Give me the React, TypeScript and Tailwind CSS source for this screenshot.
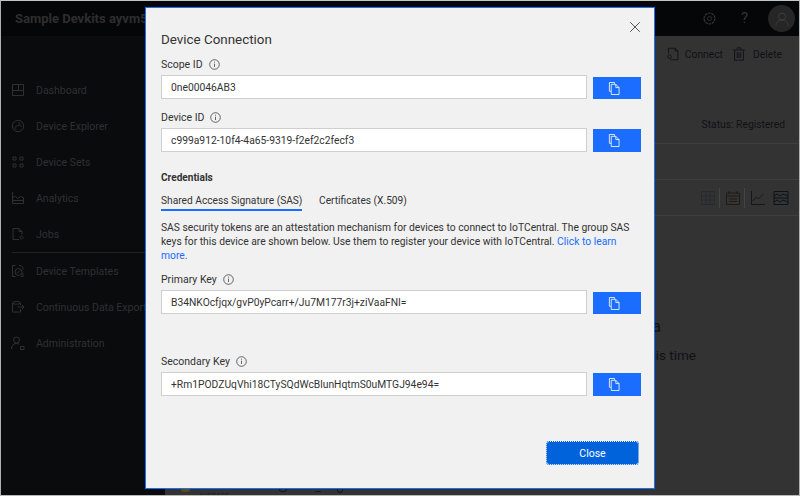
import { X } from "lucide-react";
import type { ReactNode } from "react";

function Glyph({ children, size = 18 }: { children: ReactNode; size?: number }) {
  return (
    <svg width={size} height={size} viewBox="0 0 18 18" fill="none" stroke="currentColor" strokeWidth="1" className="shrink-0">
      {children}
    </svg>
  );
}

const navTop = [
  {
    label: "Dashboard",
    icon: <path d="M3.5 3.5h11v11h-11zM3.5 9.5h11M9.5 3.5v6" />,
  },
  {
    label: "Device Explorer",
    icon: (
      <>
        <circle cx="9" cy="9" r="5.7" />
        <path d="M7 12.5c-2-2-.5-3.5 1-3.5s3-1.5 2-4M10.5 8.5a1 1 0 1 1 1.5 1.5" />
      </>
    ),
  },
  {
    label: "Device Sets",
    icon: <path d="M4 4h3v3H4zM11 4h3v3h-3zM4 11h3v3H4zM11 11h3v3h-3z" />,
  },
  {
    label: "Analytics",
    icon: <path d="M3.5 3v11.5h11v-6l-3-1-3 2-2-2-3 1M3.5 11.5h11" />,
  },
  {
    label: "Jobs",
    icon: <path d="M10 14.5H4V3.5h6l3 3v3M10 3.5v3h3M12.5 11a1.5 1.5 0 1 0 .01 0" />,
  },
];

const navBottom = [
  {
    label: "Device Templates",
    icon: (
      <>
        <path d="M3.5 3.5h3M3.5 14.5V3.5M3.5 14.5h3M10 3.5h2l2 2v2M14 11v3.5h-2" />
        <circle cx="9.5" cy="10" r="3.5" />
        <path d="M8 11.5l3-3" />
      </>
    ),
  },
  {
    label: "Continuous Data Export",
    icon: <path d="M3.5 5v9h8v-3M3.5 5c0-2 8-2 8 0v2M3.5 5c0 1.5 8 1.5 8 0M9 9h6M13 7l2 2-2 2" />,
  },
  {
    label: "Administration",
    icon: (
      <>
        <circle cx="7.5" cy="6" r="3" />
        <path d="M2.5 15c0-3.5 2-5.5 5-5.5 1 0 1.8.2 2.5.6M11.5 12.5H15v3h-3.5z" />
      </>
    ),
  },
];

function NavItem({ label, icon }: { label: string; icon: ReactNode }) {
  return (
    <div className="flex h-9 items-center gap-[9px] pl-[8px] text-[10.5px] text-[#2f3033] whitespace-nowrap">
      <Glyph>{icon}</Glyph>
      <span className="pt-[2px]">{label}</span>
    </div>
  );
}

function Info() {
  return (
    <svg width="11" height="11" viewBox="0 0 11 11" fill="none" stroke="#555" strokeWidth="0.9">
      <circle cx="5.5" cy="5.5" r="4.8" />
      <path d="M5.5 4.7V8M5.5 2.7v1" />
    </svg>
  );
}

function KeyField({ label, value, className, tall }: { label: string; value: string; className: string; tall?: boolean }) {
  return (
    <div className={className}>
      <div className="flex h-[16px] items-center gap-[6px] text-[10.5px] text-[#333]">
        <span className="pt-[2px]">{label}</span>
        <Info />
      </div>
      <div className="mt-[3px] flex h-[24px]">
        <div className="flex w-[426px] items-center border border-[#cfcfcf] bg-white pl-[9px] pt-[2px] text-[10.3px] text-[#333] whitespace-nowrap">
          {value}
        </div>
        <button className={`ml-[6px] flex w-[48px] items-center justify-center self-end bg-[#1a6dff] pr-[6px] ${tall ? "h-[23px]" : "h-[22px]"}`}>
          <svg width="12" height="13" viewBox="0 0 13 14" fill="none" stroke="#e6efff" strokeWidth="1">
            <path d="M7 2V.5H1.5V10H3.5" />
            <path d="M3.5 2.5h5L12 6v7.5H3.5z" fill="#1a6dff" />
            <path d="M8.5 2.5V6H12" />
          </svg>
        </button>
      </div>
    </div>
  );
}

export default function App() {
  return (
    <div className="relative flex h-[496px] w-[800px] flex-col overflow-hidden border border-b-[#b8b8b8] border-l-[#b0b0b0] border-r-[#b0b0b0] border-t-[#c4c4c4] bg-[#333] font-['Roboto','Open_Sans',sans-serif]">
      <header className="flex h-[35px] shrink-0 items-center bg-[#050608]">
        <span className="pl-[14px] text-[13px] font-bold text-[#2e2e2e] whitespace-nowrap">Sample Devkits ayvm5</span>
        <div className="ml-auto flex items-center text-[#333]">
          <Glyph size={15}>
            <circle cx="9" cy="9" r="2.5" />
            <circle cx="9" cy="9" r="6.5" strokeDasharray="3 1" strokeWidth="1.6" />
          </Glyph>
          <span className="ml-[24px] w-[12px] text-[15px]">?</span>
          <div className="ml-[15px] mr-[4px] flex h-[27px] w-[27px] items-center justify-center rounded-full bg-[#262626] text-[#3d3d3d]">
            <svg width="14" height="14" viewBox="0 0 14 14" fill="none" stroke="currentColor">
              <circle cx="7" cy="4.5" r="3.5" />
              <path d="M1 14c0-4 2.5-6 6-6s6 2 6 6" />
            </svg>
          </div>
        </div>
      </header>

      <div className="flex min-h-0 flex-1">
        <aside className="w-[164px] shrink-0 bg-[#0a0b0d] pt-[36px]">
          {navTop.map((n) => (
            <NavItem key={n.label} {...n} />
          ))}
          <div className="mx-[11px] border-t border-[#222]" />
          {navBottom.map((n) => (
            <NavItem key={n.label} {...n} />
          ))}
        </aside>

        <main className="flex min-w-0 flex-1 flex-col text-[#101114]">
          <div className="flex h-[36px] shrink-0 items-center justify-end pr-[17px] text-[10.3px]">
            <Glyph size={16}>
              <path d="M6 15.5H14.5V5.5l-3-3H4V8M11.5 2.5v3h3" />
              <circle cx="5" cy="12" r="2" />
            </Glyph>
            <span className="ml-[4px] pt-[2px]">Connect</span>
            <div className="ml-[8px]">
              <Glyph size={16}>
                <path d="M4 5v11h10V5M2.5 4.500h13M7 4V2h4v2M7 7v6.5M9 7v6.5M11 7v6.5" />
              </Glyph>
            </div>
            <span className="ml-[6px] pt-[2px]">Delete</span>
          </div>
          <div className="flex h-[72px] shrink-0 items-end justify-end border-b border-[#3f3f3f] pb-[11px] pr-[14px] text-[10.3px]">
            Status: Registered
          </div>
          <div className="h-[36px] shrink-0 border-b border-[#3f3f3f]" />
          <div className="flex h-[36px] shrink-0 items-center justify-end border-b border-[#3f3f3f] pr-[9px]">
            <Glyph>
              <path d="M2.5 2.5h13v13h-13zM2.5 7h13M2.5 11h13M7 2.5v13M11 2.5v13" stroke="#262b30" />
            </Glyph>
            <div className="ml-[2px] mr-[4px] h-[20px] border-l border-[#444]" />
            <Glyph>
              <path d="M2.5 4h13v11.5h-13zM2.5 7h13M5 2v3M13 2v3M5 10h8M5 12.5h8" stroke="#1f1c18" />
            </Glyph>
            <div className="ml-[2px] mr-[4px] h-[20px] border-l border-[#444]" />
            <Glyph>
              <path d="M2.5 2v13.5H16M3.5 12l4-4 2 2 5-5" stroke="#14181d" />
            </Glyph>
            <div className="ml-[5px]">
              <Glyph>
                <path d="M2 2.5h14v13H2zM2 9h14M2 7l3-2 3 2 3-2 5 2M2 13l3-2 3 2 3-2 5 2" stroke="#0f1216" />
              </Glyph>
            </div>
          </div>
          <div className="flex min-h-0 flex-1 flex-col items-end pt-[99px]">
            <p className="pr-[138px] text-[16px] leading-[24px] whitespace-nowrap">There is no data</p>
            <p className="mt-[6px] pr-[103px] text-[13.5px] leading-[20px] whitespace-nowrap">No data at this time</p>
          </div>
          <div className="flex h-[6px] shrink-0 items-start overflow-hidden text-[7px] leading-[8px] text-[#1a1a1a]">
            <span className="ml-[16px] h-[3px] w-[9px] rounded-b-full bg-[#5c4c14]" />
            <span className="ml-[9px] mt-[3px]">AVERAGE</span>
            <span className="ml-[50px] h-[3px] w-[8px] rounded-b-full border border-t-0 border-[#1a1a1a]" />
            <span className="ml-[28px] h-[3px] w-[6px] border-b border-[#1a1a1a]" />
            <span className="ml-[16px] h-[4px] w-[6px] rounded-b-full border border-t-0 border-[#1a1a1a]" />
          </div>
        </main>
      </div>

      <div
        role="dialog"
        className="absolute left-[144px] top-[6px] flex h-[482px] w-[510px] flex-col border border-[#1a6dff] bg-[#f1f1f1] pl-[15px]"
      >
        <button className="absolute right-[10px] top-[10px] text-[#444]">
          <X size={18} strokeWidth={1.2} />
        </button>
        <h2 className="mt-[22px] h-[20px] text-[13.4px] leading-[20px] text-[#333]">Device Connection</h2>

        <KeyField label="Scope ID" value="0ne00046AB3" className="mt-[6px]" />
        <KeyField label="Device ID" value="c999a912-10f4-4a65-9319-f2ef2c2fecf3" className="mt-[10px]" tall />

        <p className="mt-[18px] text-[10.1px] leading-[16px] font-bold text-[#333]">Credentials</p>
        <div className="mt-[6px] flex items-start gap-[17px] text-[10.2px] leading-[16px] text-[#333] whitespace-nowrap">
          <span className="w-[141px] border-b-2 border-[#1a6dff] pt-[1px]">Shared Access Signature (SAS)</span>
          <span className="pt-[1px]">Certificates (X.509)</span>
        </div>

        <p className="mt-[10px] text-[10.3px] leading-[14px] text-[#333] whitespace-nowrap">
          SAS security tokens are an attestation mechanism for devices to connect to IoTCentral. The group SAS
          <br />
          keys for this device are shown below. Use them to register your device with IoTCentral.{" "}
          <a className="text-[#1a6dff]">Click to learn</a>
          <br />
          <a className="text-[#1a6dff]">more.</a>
        </p>

        <KeyField label="Primary Key" value="B34NKOcfjqx/gvP0yPcarr+/Ju7M177r3j+ziVaaFNI=" className="mt-[8px]" />
        <KeyField label="Secondary Key" value="+Rm1PODZUqVhi18CTySQdWcBlunHqtmS0uMTGJ94e94=" className="mt-[39px]" tall />

        <div className="mt-[45px] flex justify-end pr-[15px]">
          <button className="h-[24px] w-[93px] rounded-[3px] border border-dotted border-[#0063db] bg-[#0063db] bg-clip-padding pt-[1px] text-[10.5px] text-white">
            Close
          </button>
        </div>
      </div>
    </div>
  );
}
